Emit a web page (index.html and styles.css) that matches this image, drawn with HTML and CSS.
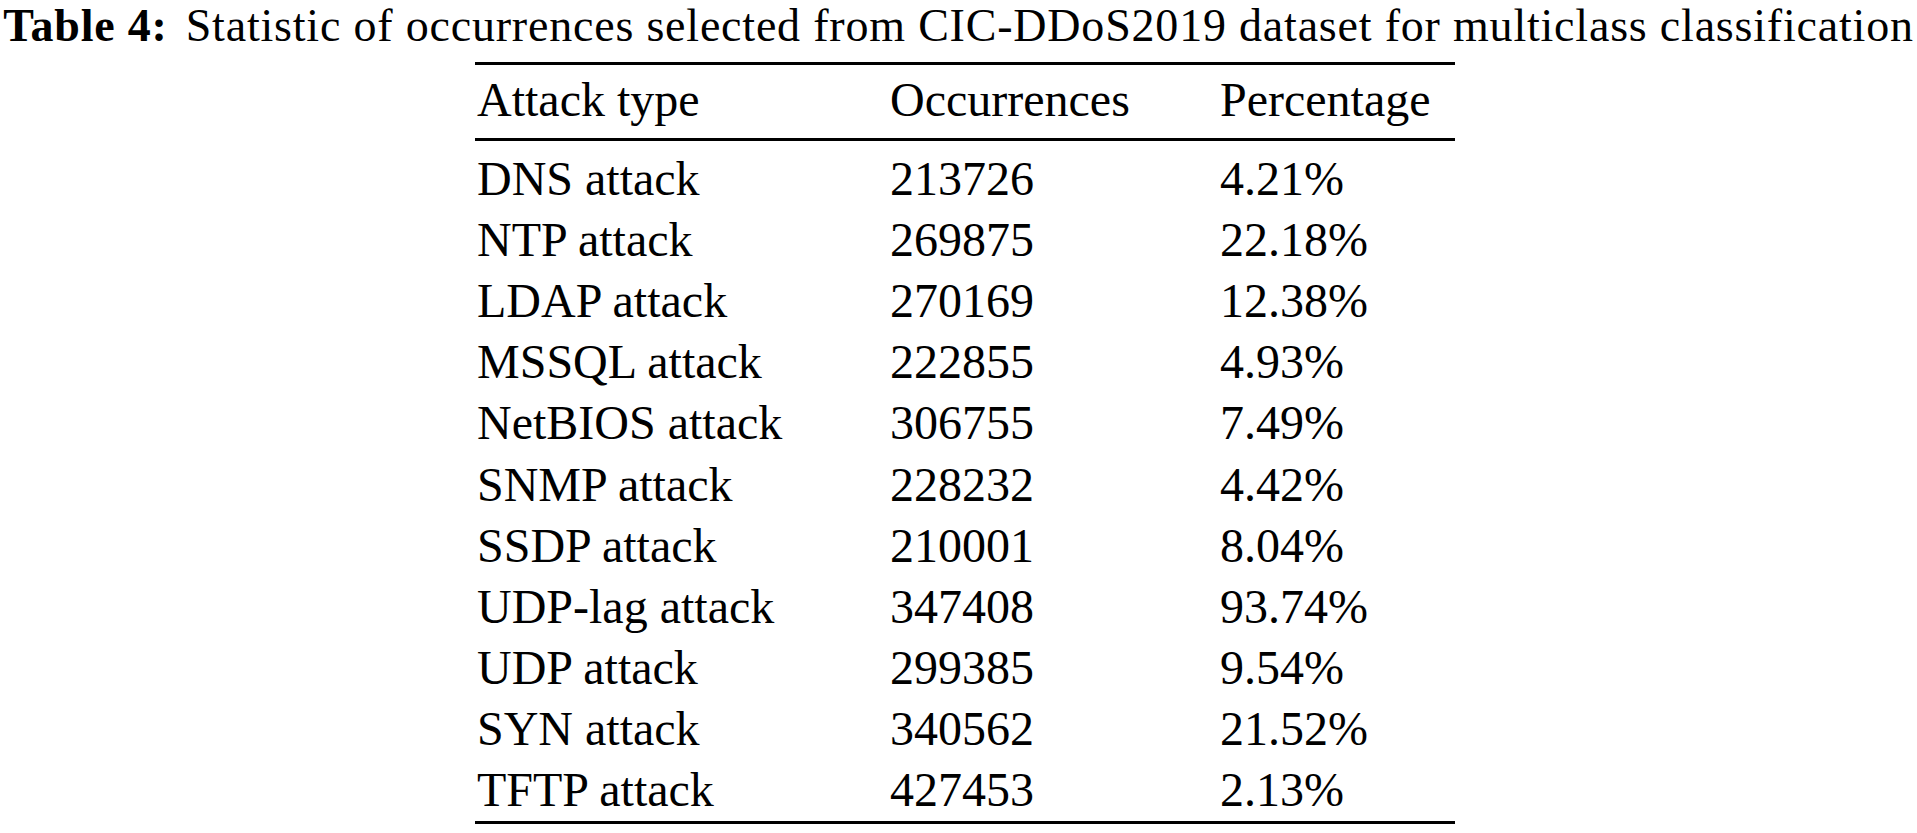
FILE: index.html
```html
<!DOCTYPE html>
<html>
<head>
<meta charset="utf-8">
<link rel="stylesheet" href="styles.css">
</head>
<body>
<div class="page">
  <p class="caption"><span class="label">Table 4:</span>Statistic of occurrences selected from CIC-DDoS2019 dataset for multiclass classification</p>
  <table class="stats">
    <thead>
      <tr><th class="c1">Attack type</th><th class="c2">Occurrences</th><th class="c3">Percentage</th></tr>
    </thead>
    <tbody>
      <tr><td>DNS attack</td><td>213726</td><td>4.21%</td></tr>
      <tr><td>NTP attack</td><td>269875</td><td>22.18%</td></tr>
      <tr><td>LDAP attack</td><td>270169</td><td>12.38%</td></tr>
      <tr><td>MSSQL attack</td><td>222855</td><td>4.93%</td></tr>
      <tr><td>NetBIOS attack</td><td>306755</td><td>7.49%</td></tr>
      <tr><td>SNMP attack</td><td>228232</td><td>4.42%</td></tr>
      <tr><td>SSDP attack</td><td>210001</td><td>8.04%</td></tr>
      <tr><td>UDP-lag attack</td><td>347408</td><td>93.74%</td></tr>
      <tr><td>UDP attack</td><td>299385</td><td>9.54%</td></tr>
      <tr><td>SYN attack</td><td>340562</td><td>21.52%</td></tr>
      <tr><td>TFTP attack</td><td>427453</td><td>2.13%</td></tr>
    </tbody>
  </table>
</div>
</body>
</html>
```
FILE: styles.css
```css
html, body {
  margin: 0;
  padding: 0;
  background: #ffffff;
}
.page {
  width: 1917px;
  height: 833px;
  overflow: hidden;
  font-family: "Liberation Serif", "Times New Roman", serif;
  color: #000000;
}
.caption {
  margin: 0;
  font-size: 46px;
  line-height: 51px;
  letter-spacing: 0.8px;
  white-space: nowrap;
  text-align: center;
}
.label {
  font-weight: bold;
  margin-right: 18px;
}
.stats {
  margin: 11px 0 0 475px;
  border-collapse: collapse;
  border-top: 3px solid #000;
  border-bottom: 3px solid #000;
  font-size: 48px;
}
.stats th, .stats td {
  padding: 0 0 0 2px;
  text-align: left;
  font-weight: normal;
  line-height: 61.1px;
  white-space: nowrap;
}
.stats thead th {
  border-bottom: 3px solid #000;
  padding-top: 4px;
  padding-bottom: 8px;
}
.stats tbody tr:first-child td {
  padding-top: 7px;
}
.stats tbody tr:last-child td {
  padding-bottom: 1px;
}
.c1 { width: 411px; }
.c2 { width: 328px; }
.c3 { width: 235px; }
```
